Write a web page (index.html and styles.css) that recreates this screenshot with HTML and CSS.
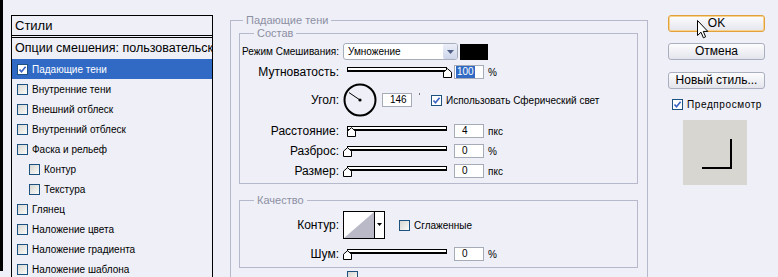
FILE: index.html
```html
<!DOCTYPE html>
<html lang="ru">

<head>
    <meta charset="utf-8">
    <meta name="viewport" content="width=device-width, initial-scale=1">
    <title>Стиль слоя</title>
    <link rel="stylesheet" href="styles.css">
</head>

<body>
<div class="dialog">
    <div class="edge"></div>

    <!-- Список стилей слева -->
    <div class="styles">
        <div class="styles-head">Стили</div>
        <div class="styles-blend">Опции смешения: пользовательск</div>
        <div class="item selected">
            <span class="box checked"><svg width="9" height="9" viewBox="0 0 9 9"><path d="M1.5 4.5 L3.5 6.7 L7.6 1.8" fill="none" stroke="#3b63c4" stroke-width="1.7"/></svg></span>Падающие тени
        </div>
        <div class="item"><span class="box"></span>Внутренние тени</div>
        <div class="item"><span class="box"></span>Внешний отблеск</div>
        <div class="item"><span class="box"></span>Внутренний отблеск</div>
        <div class="item"><span class="box"></span>Фаска и рельеф</div>
        <div class="item sub"><span class="box"></span>Контур</div>
        <div class="item sub"><span class="box"></span>Текстура</div>
        <div class="item"><span class="box"></span>Глянец</div>
        <div class="item"><span class="box"></span>Наложение цвета</div>
        <div class="item"><span class="box"></span>Наложение градиента</div>
        <div class="item"><span class="box"></span>Наложение шаблона</div>
    </div>

    <!-- Настройки тени -->
    <div class="main">
        <fieldset class="group outer">
            <legend>Падающие тени</legend>

            <fieldset class="group inner">
                <legend>Состав</legend>

                <div class="row row-mode">
                    <span class="label small">Режим Смешивания:</span>
                    <span class="select">
                        <span class="select-text">Умножение</span>
                        <span class="select-btn"><svg width="7" height="4" viewBox="0 0 7 4"><path d="M0 0 H7 L3.5 4 Z" fill="#4f5f86"/></svg></span>
                    </span>
                    <span class="swatch"></span>
                </div>

                <div class="row row-opacity">
                    <span class="label">Мутноватость:</span>
                    <span class="slider">
                        <span class="track"></span>
                        <svg class="thumb" style="left: 100px" width="9" height="10" viewBox="0 0 9 10"><path d="M0.5 9.5 V4.2 L4.5 0.7 L8.5 4.2 V9.5 Z" fill="#fff" stroke="#000"/></svg>
                    </span>
                    <span class="field"><span class="hl">100</span></span>
                    <span class="unit">%</span>
                </div>

                <div class="row row-angle">
                    <span class="label">Угол:</span>
                    <svg class="dial" width="34" height="34" viewBox="0 0 34 34">
                        <circle cx="17" cy="17" r="15.5" fill="none" stroke="#000" stroke-width="2"/>
                        <line x1="17" y1="17" x2="6" y2="9.6" stroke="#000" stroke-width="1"/>
                        <circle cx="17" cy="17" r="1.6" fill="#000"/>
                    </svg>
                    <span class="field">146</span>
                    <span class="deg"></span>
                    <span class="box checked"><svg width="9" height="9" viewBox="0 0 9 9"><path d="M1.5 4.5 L3.5 6.7 L7.6 1.8" fill="none" stroke="#3b63c4" stroke-width="1.7"/></svg></span>
                    <span class="check-text">Использовать Сферический свет</span>
                </div>

                <div class="row row-first">
                    <span class="label">Расстояние:</span>
                    <span class="slider">
                        <span class="track"></span>
                        <svg class="thumb" style="left: 4px" width="9" height="10" viewBox="0 0 9 10"><path d="M0.5 9.5 V4.2 L4.5 0.7 L8.5 4.2 V9.5 Z" fill="#fff" stroke="#000"/></svg>
                    </span>
                    <span class="field">4</span>
                    <span class="unit">пкс</span>
                </div>

                <div class="row">
                    <span class="label">Разброс:</span>
                    <span class="slider">
                        <span class="track"></span>
                        <svg class="thumb" style="left: 0px" width="9" height="10" viewBox="0 0 9 10"><path d="M0.5 9.5 V4.2 L4.5 0.7 L8.5 4.2 V9.5 Z" fill="#fff" stroke="#000"/></svg>
                    </span>
                    <span class="field">0</span>
                    <span class="unit">%</span>
                </div>

                <div class="row">
                    <span class="label">Размер:</span>
                    <span class="slider">
                        <span class="track"></span>
                        <svg class="thumb" style="left: 0px" width="9" height="10" viewBox="0 0 9 10"><path d="M0.5 9.5 V4.2 L4.5 0.7 L8.5 4.2 V9.5 Z" fill="#fff" stroke="#000"/></svg>
                    </span>
                    <span class="field">0</span>
                    <span class="unit">пкс</span>
                </div>
            </fieldset>

            <fieldset class="group inner quality">
                <legend>Качество</legend>

                <div class="row row-contour">
                    <span class="label">Контур:</span>
                    <svg class="contour" width="42" height="28" viewBox="0 0 42 28">
                        <rect x="0.5" y="0.5" width="41" height="27" fill="#fff" stroke="#000"/>
                        <path d="M1 27 L31 1 V27 Z" fill="#b9b9c8"/>
                        <line x1="31.5" y1="0" x2="31.5" y2="28" stroke="#000"/>
                        <path d="M34 12 H39 L36.5 15 Z" fill="#000"/>
                    </svg>
                    <span class="box smooth"></span>
                    <span class="check-text">Сглаженные</span>
                </div>

                <div class="row row-noise">
                    <span class="label">Шум:</span>
                    <span class="slider">
                        <span class="track"></span>
                        <svg class="thumb" style="left: 0px" width="9" height="10" viewBox="0 0 9 10"><path d="M0.5 9.5 V4.2 L4.5 0.7 L8.5 4.2 V9.5 Z" fill="#fff" stroke="#000"/></svg>
                    </span>
                    <span class="field">0</span>
                    <span class="unit">%</span>
                </div>
            </fieldset>

            <div class="tail"><span class="box"></span></div>
        </fieldset>
    </div>

    <!-- Кнопки и просмотр -->
    <div class="side">
        <div class="btn btn-ok">OK</div>
        <div class="btn btn-cancel">Отмена</div>
        <div class="btn">Новый стиль...</div>

        <div class="preview-check">
            <span class="box checked"><svg width="9" height="9" viewBox="0 0 9 9"><path d="M1.5 4.5 L3.5 6.7 L7.6 1.8" fill="none" stroke="#3b63c4" stroke-width="1.7"/></svg></span>
            <span class="preview-text">Предпросмотр</span>
        </div>

        <div class="preview"><div class="corner"></div></div>

        <!-- Курсор мыши над OK -->
        <svg class="cursor" width="12" height="19" viewBox="0 0 12 19"><path d="M0.5 0.5 V15.5 L4 12.2 L6.4 17.8 L8.6 16.8 L6.3 11.4 H10.8 Z" fill="#fff" stroke="#000" stroke-linejoin="round"/></svg>
    </div>
</div>
</body>

</html>
```

FILE: styles.css
```css
body {
    margin: 0;
    height: 277px;
    overflow: hidden;
    background-color: #eeeff7;
    font-family: "Liberation Sans", Arial, sans-serif;
    font-size: 10px;
    color: #000;
}

.dialog {
    display: flex;
    align-items: flex-start;
}

.edge {
    width: 3px;
    height: 271px;
    background-color: #000;
}

/* Список стилей */
.styles {
    width: 202px;
    height: 280px;
    margin: 15px 0 0 8px;
    box-sizing: border-box;
    border: 1px solid #000;
    overflow: hidden;
}

.styles-head {
    height: 19px;
    line-height: 19px;
    padding-left: 3px;
    font-size: 13px;
    border-bottom: 3px double #000;
}

.styles-blend {
    height: 21px;
    line-height: 21px;
    padding-left: 3px;
    font-size: 12.5px;
    white-space: nowrap;
}

.item {
    display: flex;
    align-items: center;
    height: 20px;
    padding-left: 5px;
    white-space: nowrap;
}

.item.sub {
    padding-left: 17px;
}

.item.selected {
    background-color: #316ac5;
    color: #fff;
}

/* Флажки */
.box {
    display: flex;
    align-items: center;
    justify-content: center;
    flex: none;
    width: 11px;
    height: 11px;
    box-sizing: border-box;
    margin-right: 4px;
    border: 1px solid #1c5180;
    background: linear-gradient(135deg, #d6d6d2, #fbfbf9);
}

.box.checked {
    background: #fff;
}

/* Группы */
.main {
    margin: 14px 0 0 17px;
}

.group {
    margin: 0;
    padding: 0;
    min-width: 0;
    border: 1px solid #b6b9cb;
}

.group legend {
    padding: 0 3px;
    font-size: 11px;
    line-height: 13px;
    color: #8d8fa3;
}

.outer {
    width: 418px;
    height: 300px;
    box-sizing: border-box;
    padding: 0 9px 0 8px;
}

.outer > legend {
    margin-left: 4px;
}

.inner {
    padding: 0 0 2px 0;
}

.inner > legend {
    margin-left: 14px;
}

.quality {
    margin-top: 10px;
    padding-bottom: 3px;
}

/* Строки параметров */
.row {
    display: flex;
    align-items: center;
    height: 20px;
}

.label {
    flex: none;
    width: 99px;
    margin-right: 4px;
    text-align: right;
    font-size: 12px;
    white-space: nowrap;
}

.label.small {
    font-size: 10px;
}

.row-mode {
    height: 17px;
    margin-top: 3px;
}

.row-opacity {
    margin-top: 2px;
}

.row-angle {
    height: 34px;
    margin-top: 1px;
}

.row-first {
    margin-top: 4px;
}

.row-contour {
    height: 28px;
    margin-top: 4px;
}

.row-noise {
    margin-top: 5px;
}

.select {
    display: flex;
    align-items: center;
    width: 115px;
    height: 17px;
    box-sizing: border-box;
    border: 1px solid #a7aebb;
    border-radius: 3px;
    background-color: #fff;
}

.select-text {
    flex: 1;
    padding-left: 4px;
}

.select-btn {
    display: flex;
    align-items: center;
    justify-content: center;
    width: 14px;
    height: 15px;
    border-radius: 2px;
    background: linear-gradient(#eceff8, #cdd5ea);
}

.swatch {
    width: 28px;
    height: 16px;
    margin-left: 2px;
    background-color: #000;
}

/* Ползунки */
.slider {
    position: relative;
    flex: none;
    width: 106px;
    height: 11px;
}

.track {
    display: block;
    width: 100px;
    height: 5px;
    margin-left: 4px;
    box-sizing: border-box;
    border: 1px solid #000;
    border-bottom-width: 2px;
    background-color: #fff;
}

.thumb {
    position: absolute;
    top: 1px;
}

.field {
    flex: none;
    width: 30px;
    height: 14px;
    box-sizing: border-box;
    margin-left: 5px;
    padding-left: 7px;
    border: 1px solid #a5acb8;
    background-color: #fff;
    line-height: 12px;
}

.row-opacity .field {
    padding-left: 1px;
}

.hl {
    display: inline-block;
    padding: 0 1px;
    background-color: #316ac5;
    color: #fff;
}

.unit {
    margin-left: 4px;
}

.dial {
    flex: none;
}

.deg {
    align-self: flex-start;
    width: 1px;
    height: 2px;
    margin: 10px 11px 0 7px;
    background-color: #777;
}

.contour {
    flex: none;
}

.box.smooth {
    margin-left: 14px;
}

.check-text {
    white-space: nowrap;
}

.tail {
    margin: 3px 0 0 108px;
}

/* Кнопки справа */
.side {
    position: relative;
    display: flex;
    flex-direction: column;
    width: 97px;
    margin: 15px 0 0 20px;
}

.btn {
    height: 17px;
    box-sizing: border-box;
    border: 1px solid #a9afbf;
    border-radius: 3px;
    background: linear-gradient(#fdfdfe, #e4e5ec);
    text-align: center;
    line-height: 15px;
    font-size: 12px;
}

.btn-ok {
    border-color: #e3a13c;
    box-shadow: inset 0 0 0 1px #f7d38f;
    margin-bottom: 11px;
}

.btn-cancel {
    margin-bottom: 12px;
}

.preview-check {
    display: flex;
    align-items: center;
    height: 11px;
    margin-top: 10px;
    padding-left: 4px;
}

.preview-text {
    letter-spacing: 0.6px;
}

.preview {
    width: 64px;
    height: 65px;
    margin: 10px 0 0 15px;
    overflow: hidden;
    background-color: #d7d6d0;
}

.corner {
    width: 28px;
    height: 28px;
    margin: 19px 0 0 19px;
    border-right: 2px solid #000;
    border-bottom: 2px solid #000;
}

.cursor {
    position: absolute;
    top: 5px;
    left: 29px;
}
```
